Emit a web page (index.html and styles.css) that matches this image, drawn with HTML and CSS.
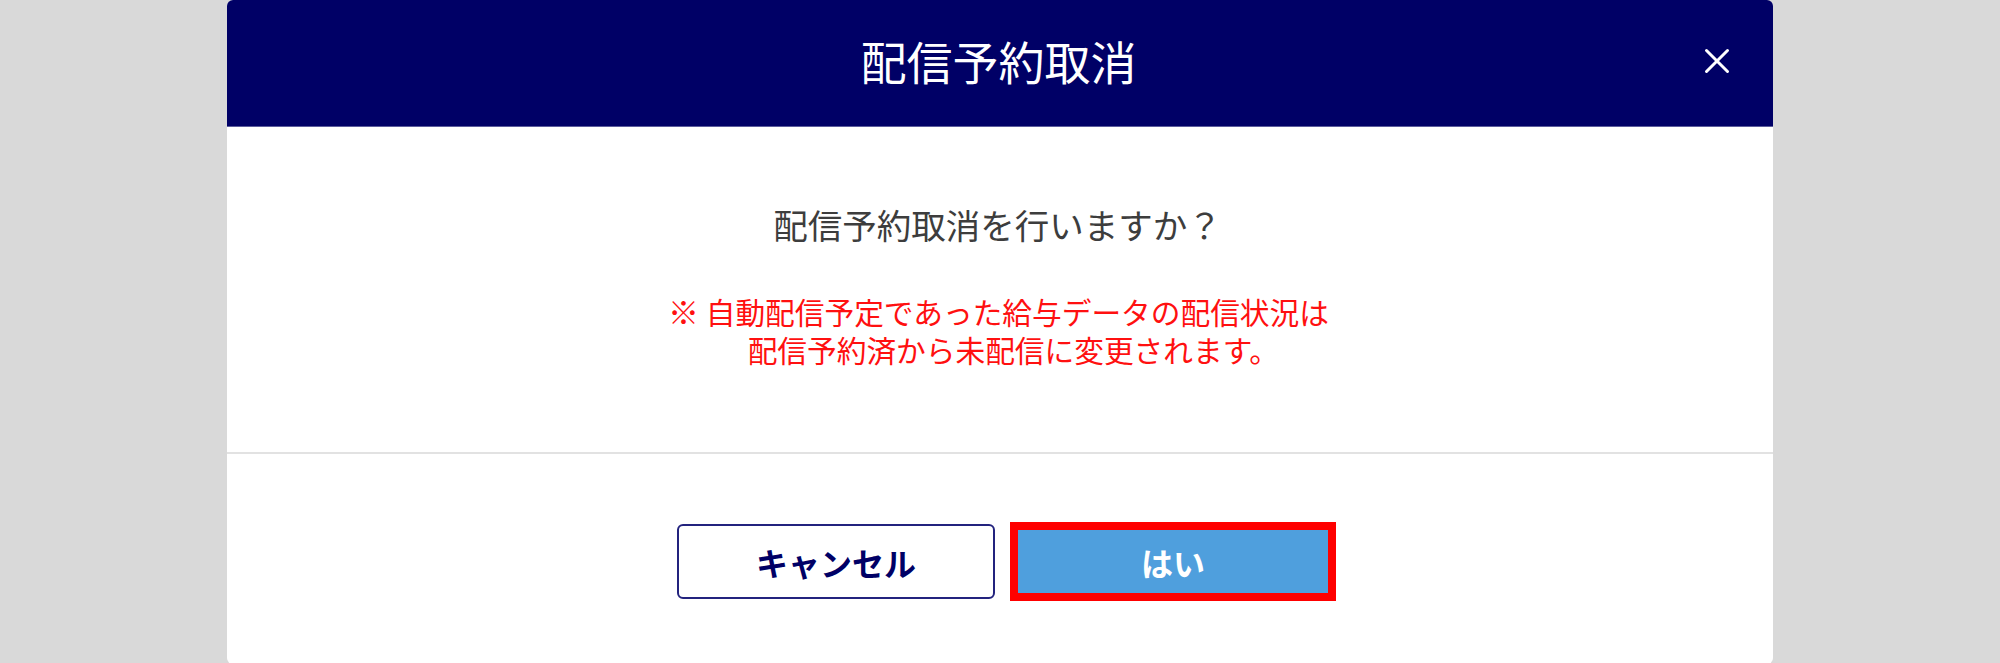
FILE: index.html
```html
<!DOCTYPE html>
<html lang="ja">
<head>
<meta charset="utf-8">
<title>配信予約取消</title>
<link rel="stylesheet" href="styles.css">
</head>
<body>
<div class="modal">
  <div class="modal-header">
    <h1 class="modal-title">配信予約取消</h1>
    <button class="close-btn" aria-label="閉じる">
      <svg width="26" height="26" viewBox="0 0 26 26">
        <path d="M2.5 2.5 L23.5 23.5 M23.5 2.5 L2.5 23.5" stroke="#fff" stroke-width="3" stroke-linecap="round" fill="none"/>
      </svg>
    </button>
  </div>
  <div class="modal-body">
    <p class="question">配信予約取消を行いますか？</p>
    <div class="notice">
      <span class="notice-line"><b class="mark">※</b> 自動配信予定であった給与データの配信状況は</span>
      <span class="notice-line">　配信予約済から未配信に変更されます。</span>
    </div>
  </div>
  <div class="modal-footer">
    <button class="btn btn-cancel">キャンセル</button>
    <button class="btn btn-yes">はい</button>
  </div>
</div>
</body>
</html>
```
FILE: styles.css
```css
html, body {
  margin: 0;
  padding: 0;
  background: #d9d9d9;
  overflow: hidden;
  font-family: "Noto Sans CJK JP", "Noto Sans", sans-serif;
}

.modal {
  width: 1546px;
  margin: 0 auto;
  background: #ffffff;
  border-radius: 6px;
  overflow: hidden;
}

.modal-header {
  position: relative;
  height: 126px;
  background: #000066;
  border-bottom: 1px solid #5c5c9c;
  text-align: center;
}

.modal-title {
  margin: 0;
  padding-right: 3px;
  font-size: 46px;
  font-weight: 400;
  line-height: 120px;
  color: #ffffff;
}

.close-btn {
  position: absolute;
  top: 48px;
  right: 43px;
  width: 26px;
  height: 26px;
  padding: 0;
  border: 0;
  background: transparent;
  display: flex;
}

.modal-body {
  padding: 72px 0 83px;
  text-align: center;
}

.question {
  margin: 0;
  padding-right: 5px;
  font-size: 34.5px;
  line-height: 50px;
  color: #3d3d3d;
}

.notice {
  margin: 43px 0 0;
  padding-right: 3px;
  font-size: 29.7px;
  line-height: 38.5px;
  color: #ff1010;
}

.notice-line {
  display: block;
  height: 38.5px;
}

.mark {
  font-weight: 900;
  font-size: 31px;
}

.modal-footer {
  border-top: 2px solid #e2e2e2;
  padding: 68px 0 63px 13px;
  display: flex;
  justify-content: center;
  align-items: center;
  gap: 15px;
}

.btn {
  box-sizing: border-box;
  font-family: "Noto Sans CJK JP", "Noto Sans", sans-serif;
  font-weight: 700;
  font-size: 32px;
  cursor: pointer;
}

.btn-cancel {
  width: 318px;
  height: 75px;
  background: #ffffff;
  border: 2px solid #23237e;
  border-radius: 6px;
  color: #000066;
}

.btn-yes {
  width: 326px;
  height: 79px;
  background: #4f9fdd;
  border: 8px solid #ff0000;
  border-radius: 0;
  color: #ffffff;
}
```
